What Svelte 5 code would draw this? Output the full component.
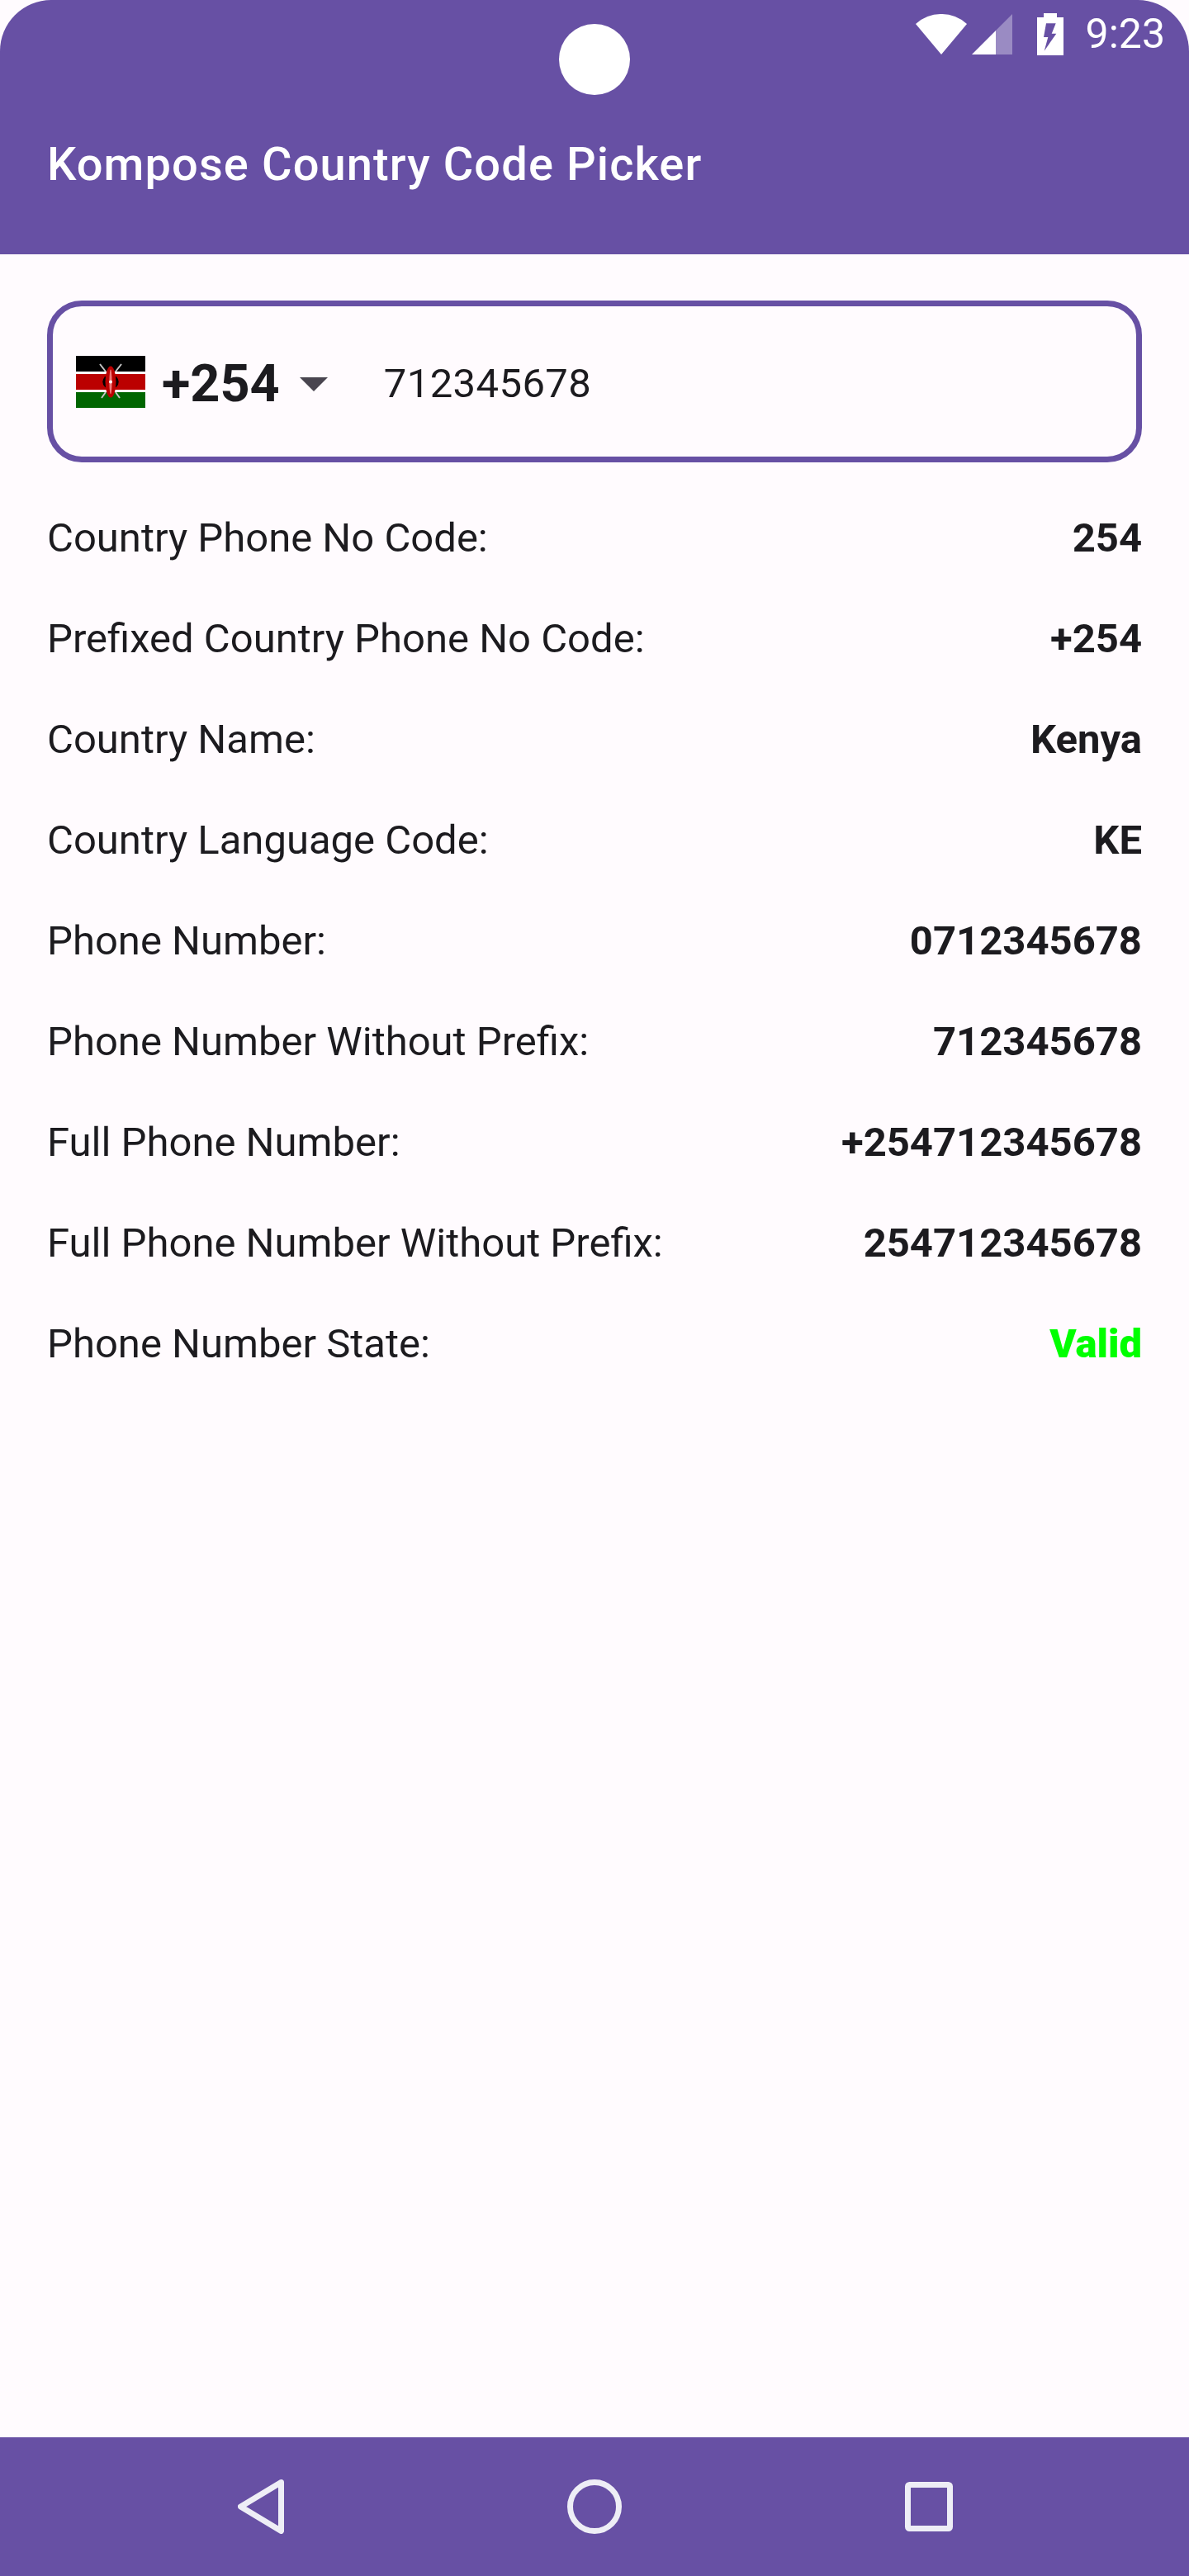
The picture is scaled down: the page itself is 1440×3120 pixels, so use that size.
<script lang="ts">
    const rows = [
        { label: "Country Phone No Code:", value: "254" },
        { label: "Prefixed Country Phone No Code:", value: "+254" },
        { label: "Country Name:", value: "Kenya" },
        { label: "Country Language Code:", value: "KE" },
        { label: "Phone Number:", value: "0712345678" },
        { label: "Phone Number Without Prefix:", value: "712345678" },
        { label: "Full Phone Number:", value: "+254712345678" },
        { label: "Full Phone Number Without Prefix:", value: "254712345678" },
        { label: "Phone Number State:", value: "Valid", valid: true },
    ];
</script>

<div class="screen">
    <header class="top">
        <div class="camera"></div>
        <div class="status">
            <svg class="wifi" viewBox="0 0 62 49" width="62" height="49">
                <path d="M0 12 A46 46 0 0 1 62 12 L31 49 Z" fill="#fff" />
            </svg>
            <svg class="signal" viewBox="0 0 49 49" width="49" height="49">
                <path d="M0 49 L29 20 V49 Z" fill="#fff" />
                <path d="M29 20 L49 0 V49 H29 Z" fill="#fff" fill-opacity="0.34" />
            </svg>
            <svg class="battery" viewBox="0 0 32 51" width="32" height="51">
                <path d="M8 0 H24 V5 H32 V51 H0 V5 H8 Z M11 12.3 L8 29 H13.3 L8.7 45.7 L23.3 24.7 H17.7 L22.7 12.3 Z" fill="#fff" fill-rule="evenodd" />
            </svg>
            <span class="time">9:23</span>
        </div>
        <h1>Kompose Country Code Picker</h1>
    </header>

    <main>
        <div class="field">
            <svg class="flag" viewBox="0 0 84 63" width="84" height="63">
                <rect width="84" height="19" fill="#000" />
                <rect y="19" width="84" height="25" fill="#fff" />
                <rect y="22" width="84" height="19" fill="#bb0000" />
                <rect y="44" width="84" height="19" fill="#006600" />
                <path d="M29 10 L36 19 M55 10 L48 19 M36 44 L31 51 M48 44 L53 51" stroke="#c4c4c4" stroke-width="2" />
                <ellipse cx="42" cy="31.5" rx="9.7" ry="9" fill="#000" />
                <ellipse cx="42" cy="31.5" rx="6.5" ry="19" fill="#bb0000" />
                <ellipse cx="42" cy="31.5" rx="1.6" ry="15" fill="#e77" />
                <circle cx="42" cy="31.5" r="2" fill="#fff" />
            </svg>
            <span class="code">+254</span>
            <svg class="arrow" viewBox="0 0 34 17" width="34" height="17">
                <path d="M0 0 H34 L17 17 Z" fill="#49454f" />
            </svg>
            <span class="number">712345678</span>
        </div>

        <div class="rows">
            {#each rows as row}
                <div class="row">
                    <span>{row.label}</span>
                    <strong class:valid={row.valid}>{row.value}</strong>
                </div>
            {/each}
        </div>
    </main>

    <nav class="bottom">
        <svg viewBox="0 0 56 66" width="56" height="66">
            <path d="M52.5 3.5 L3.5 33 L52.5 62.5 Z" fill="none" stroke="#eeeef6" stroke-width="7" stroke-linejoin="round" />
        </svg>
        <svg viewBox="0 0 66 66" width="66" height="66">
            <circle cx="33" cy="33" r="29.5" fill="none" stroke="#eeeef6" stroke-width="7" />
        </svg>
        <svg viewBox="0 0 58 60" width="58" height="60">
            <rect x="3.5" y="3.5" width="51" height="53" rx="2" fill="none" stroke="#eeeef6" stroke-width="7" />
        </svg>
    </nav>
</div>

<style>
    :global(body) {
        margin: 0;
        background: #fff;
    }

    .screen {
        --purple: #6750a4;
        --ink: #1c1b1f;

        display: flex;
        flex-direction: column;
        width: 1440px;
        height: 3120px;
        background: #fffbfe;
        color: var(--ink);
        font-family: Roboto, "Liberation Sans", sans-serif;
    }

    .top {
        position: relative;
        box-sizing: border-box;
        height: 308px;
        padding: 16px 29px 0 57px;
        background: var(--purple);
        border-radius: 62px 62px 0 0;
        color: #fff;
    }

    .camera {
        position: absolute;
        left: 677px;
        top: 29px;
        width: 86px;
        height: 86px;
        border-radius: 50%;
        background: #fff;
    }

    .status {
        display: flex;
        align-items: flex-start;
        justify-content: flex-end;
        height: 51px;
    }

    .wifi {
        margin-top: 1px;
    }

    .signal {
        margin: 1px 0 0 6px;
    }

    .battery {
        margin-left: 30px;
    }

    .time {
        margin-left: 27px;
        font-size: 50px;
        line-height: 51px;
    }

    h1 {
        margin: 99px 0 0;
        font-size: 56px;
        font-weight: 500;
        line-height: 66px;
        letter-spacing: 1.1px;
    }

    main {
        flex: 1;
        padding: 56px 57px 0;
    }

    .field {
        display: flex;
        align-items: center;
        box-sizing: border-box;
        height: 196px;
        padding: 0 0 0 28px;
        border: 7px solid var(--purple);
        border-radius: 42px;
    }

    .code {
        margin-left: 20px;
        padding-top: 4px;
        font-size: 63px;
        font-weight: 700;
    }

    .arrow {
        margin: 6px 0 0 24px;
    }

    .number {
        margin-left: 68px;
        padding-top: 4px;
        font-size: 49px;
        letter-spacing: 0.4px;
    }

    .rows {
        margin-top: 30px;
    }

    .row {
        display: flex;
        align-items: center;
        justify-content: space-between;
        height: 122px;
        font-size: 49px;
    }

    .row strong {
        font-weight: 700;
    }

    .row strong.valid {
        color: #00ff00;
        font-weight: 900;
    }

    .bottom {
        display: flex;
        align-items: center;
        justify-content: space-between;
        box-sizing: border-box;
        height: 168px;
        padding: 0 286px 0 288px;
        background: var(--purple);
    }
</style>
